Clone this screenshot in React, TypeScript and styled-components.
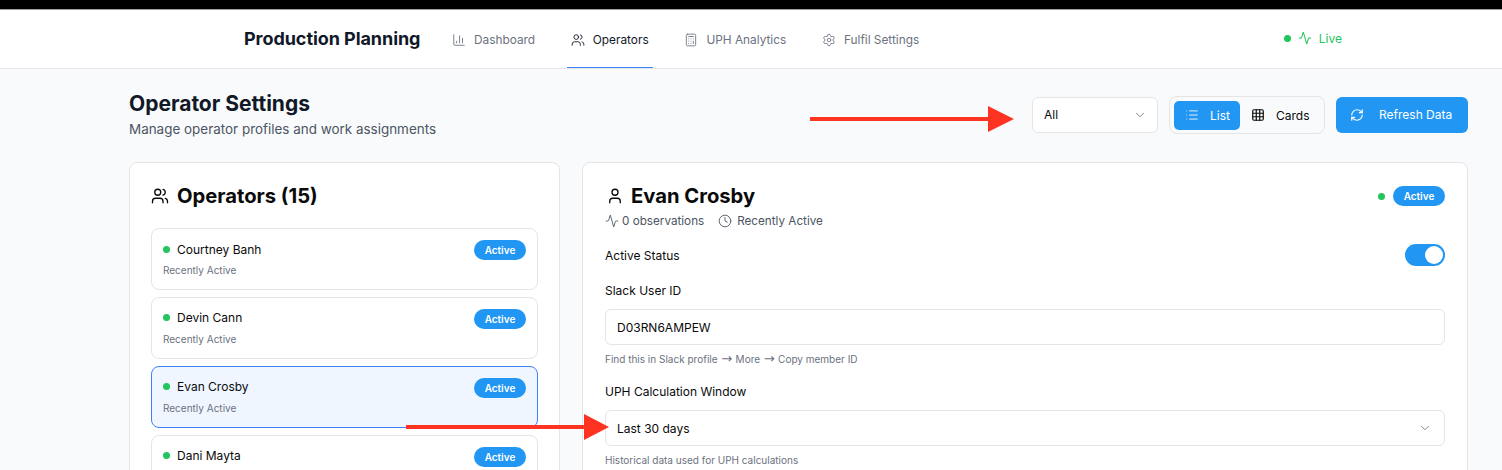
import React from "react";
import styled, { createGlobalStyle } from "styled-components";
import { Activity, Calculator, ChartColumn, ChevronDown, Clock, Grid3x3, List, RefreshCw, Settings, User, Users } from "lucide-react";

const Global = createGlobalStyle`
  html, body { margin: 0; padding: 0; height: 470px; overflow: hidden; background: #f9fafb; }
  body { font-family: Inter, "Liberation Sans", Arial, sans-serif; color: #0a0a0a; -webkit-font-smoothing: antialiased; }
  * { box-sizing: border-box; }
`;

const Page = styled.div`
  position: relative;
  width: 1502px;
  height: 470px;
  overflow: hidden;
`;
const TopStrip = styled.div`
  height: 10px;
  background: #000;
  border-bottom: 1px solid #a0a0a0;
`;
const Header = styled.header`
  height: 59px;
  background: #fff;
  border-bottom: 1px solid #e5e7eb;
  display: flex;
  align-items: stretch;
  padding-left: 244px;
  padding-right: 160px;
`;
const Brand = styled.div`
  font-size: 18px;
  font-weight: 700;
  color: #111827;
  line-height: 58px;
  width: 175px;
  letter-spacing: -0.06px;
  white-space: nowrap;
`;
const Nav = styled.nav`
  display: flex;
  margin-left: 29px;
  flex: 1;
`;
const Tab = styled.div<{ $active?: boolean }>`
  display: flex;
  align-items: center;
  gap: 8px;
  height: 58px;
  padding: 2px 4px 0;
  margin-right: 27.7px;
  font-size: 11.85px;
  color: ${(p) => (p.$active ? "#111827" : "#6b7280")};
  border-bottom: 1px solid ${(p) => (p.$active ? "#3b82f6" : "transparent")};
  white-space: nowrap;
`;
const Live = styled.div`
  display: flex;
  align-items: center;
  color: #22c55e;
  font-size: 12px;
  gap: 7px;
  padding-bottom: 2px;
`;
const Dot = styled.span`
  width: 7px;
  height: 7px;
  border-radius: 50%;
  background: #22c55e;
  flex: none;
`;
const Main = styled.main`
  padding: 27px 34px 0 129px;
`;
const TitleRow = styled.div`
  display: flex;
  justify-content: space-between;
  align-items: flex-start;
`;
const Titles = styled.div``;
const H1 = styled.h1`
  margin: 0;
  font-size: 21px;
  line-height: 16px;
  font-weight: 700;
  color: #111827;
`;
const Sub = styled.p`
  margin: 8px 0 0;
  font-size: 13.44px;
  line-height: 18px;
  color: #4b5563;
`;
const Controls = styled.div`
  display: flex;
  align-items: center;
  gap: 11px;
`;
const Select = styled.div`
  width: 126px;
  height: 36px;
  background: #fff;
  border: 1px solid #e5e5e5;
  border-radius: 6px;
  display: flex;
  align-items: center;
  justify-content: space-between;
  padding: 0 10px 1px 11px;
  font-size: 12px;
`;
const Toggle = styled.div`
  display: flex;
  height: 38px;
  width: 156px;
  padding: 4px;
  border: 1px solid #e5e5e5;
  border-radius: 8px;
`;
const ToggleBtn = styled.div<{ $on?: boolean }>`
  display: flex;
  align-items: center;
  gap: 11px;
  height: 29px;
  padding: 0 0 1px 11px;
  width: ${(p) => (p.$on ? "66px" : "auto")};
  border-radius: 5px;
  font-size: 12px;
  background: ${(p) => (p.$on ? "#2196f3" : "transparent")};
  color: ${(p) => (p.$on ? "#fff" : "#0a0a0a")};
`;
const Refresh = styled.div`
  display: flex;
  align-items: center;
  gap: 15px;
  height: 36px;
  width: 132px;
  padding: 0 0 1px 14px;
  background: #2196f3;
  color: #fff;
  border-radius: 6px;
  font-size: 12px;
`;
const Columns = styled.div`
  display: grid;
  grid-template-columns: 431px 886px;
  gap: 22px;
  margin-top: 24px;
`;
const Card = styled.section`
  background: #fff;
  border: 1px solid #e5e5e5;
  border-radius: 8px;
  height: 330px;
`;
const ListCard = styled(Card)`
  padding: 21px 21px 0 21px;
`;
const CardTitle = styled.div`
  display: flex;
  align-items: center;
  gap: 8px;
  font-size: 20.2px;
  font-weight: 700;
  line-height: 24px;
`;
const Rows = styled.div`
  margin-top: 20px;
  display: flex;
  flex-direction: column;
  gap: 6.9px;
`;
const Row = styled.div<{ $sel?: boolean }>`
  height: 62px;
  border: 1px solid ${(p) => (p.$sel ? "#3b82f6" : "#e5e5e5")};
  border-radius: 8px;
  background: ${(p) => (p.$sel ? "#eff6ff" : "#fff")};
  padding: 11px 11px 0;
`;
const RowTop = styled.div`
  display: flex;
  align-items: center;
  justify-content: space-between;
  height: 20px;
`;
const Name = styled.div`
  display: flex;
  align-items: center;
  gap: 7px;
  font-size: 12px;
  margin-top: -2px;
`;
const RowMeta = styled.div`
  margin-top: 3px;
  font-size: 10px;
  line-height: 14px;
  color: #6b7280;
`;
const Badge = styled.span`
  display: inline-flex;
  align-items: center;
  justify-content: center;
  width: 52px;
  height: 20px;
  border-radius: 10px;
  background: #2196f3;
  color: #fff;
  font-size: 10px;
  font-weight: 600;
`;
const DetailCard = styled(Card)`
  padding: 21px 22px 0;
`;
const DetailHead = styled.div`
  display: flex;
  justify-content: space-between;
  align-items: center;
  height: 24px;
`;
const DetailName = styled(CardTitle)`
  gap: 7px;
  padding-left: 1px;
`;
const HeadStatus = styled.div`
  display: flex;
  align-items: center;
  gap: 8px;
`;
const Stats = styled.div`
  display: flex;
  gap: 14px;
  margin-top: 5px;
  font-size: 11.7px;
  line-height: 16px;
  color: #4b5563;
`;
const Stat = styled.span<{ $gap: number }>`
  display: flex;
  align-items: center;
  gap: ${(p) => p.$gap}px;
`;
const StatusRow = styled.div`
  display: flex;
  justify-content: space-between;
  align-items: center;
  margin-top: 15px;
  height: 22px;
  font-size: 12px;
`;
const Switch = styled.div`
  width: 40px;
  height: 22px;
  border-radius: 11px;
  background: #2196f3;
  display: flex;
  justify-content: flex-end;
  align-items: center;
  padding-right: 2px;
`;
const Knob = styled.span`
  width: 18px;
  height: 18px;
  border-radius: 50%;
  background: #fff;
`;
const Label = styled.div<{ $top: number }>`
  font-size: 12px;
  line-height: 16px;
  margin-top: ${(p) => p.$top}px;
`;
const Field = styled.div`
  height: 36px;
  margin-top: 10px;
  border: 1px solid #e5e5e5;
  border-radius: 6px;
  background: #fff;
  display: flex;
  align-items: center;
  justify-content: space-between;
  font-size: 12px;
  padding: 0 12px 0 11px;
`;
const Hint = styled.div`
  margin-top: 7px;
  font-size: 10px;
  line-height: 14px;
  color: #6b7280;
`;
const HintArrow = styled.span`
  font-family: "DejaVu Sans", sans-serif;
  font-size: 13px;
  line-height: 0;
  margin: 0 0.75px;
`;
const Arrow = styled.svg<{ $x: number; $y: number }>`
  position: absolute;
  left: ${(p) => p.$x}px;
  top: ${(p) => p.$y}px;
`;

const names = ["Courtney Banh", "Devin Cann", "Evan Crosby", "Dani Mayta"];

export default function App() {
  return (
    <Page>
      <Global />
      <TopStrip />
      <Header>
        <Brand>Production Planning</Brand>
        <Nav>
          <Tab><ChartColumn size={14} strokeWidth={1.5} />Dashboard</Tab>
          <Tab $active><Users size={14} strokeWidth={1.5} />Operators</Tab>
          <Tab><Calculator size={14} strokeWidth={1.5} />UPH Analytics</Tab>
          <Tab><Settings size={14} strokeWidth={1.5} />Fulfil Settings</Tab>
        </Nav>
        <Live><Dot /><Activity size={14} strokeWidth={1.75} />Live</Live>
      </Header>
      <Main>
        <TitleRow>
          <Titles>
            <H1>Operator Settings</H1>
            <Sub>Manage operator profiles and work assignments</Sub>
          </Titles>
          <Controls>
            <Select>All<ChevronDown size={14} color="#737373" strokeWidth={1.5} /></Select>
            <Toggle>
              <ToggleBtn $on><List size={14} strokeWidth={1.5} />List</ToggleBtn>
              <ToggleBtn><Grid3x3 size={14} strokeWidth={2} />Cards</ToggleBtn>
            </Toggle>
            <Refresh><RefreshCw size={14} strokeWidth={2} />Refresh Data</Refresh>
          </Controls>
        </TitleRow>
        <Columns>
          <ListCard>
            <CardTitle><Users size={18} strokeWidth={1.75} />Operators (15)</CardTitle>
            <Rows>
              {names.map((n) => (
                <Row key={n} $sel={n === "Evan Crosby"}>
                  <RowTop>
                    <Name><Dot />{n}</Name>
                    <Badge>Active</Badge>
                  </RowTop>
                  <RowMeta>Recently Active</RowMeta>
                </Row>
              ))}
            </Rows>
          </ListCard>
          <DetailCard>
            <DetailHead>
              <DetailName><User size={18} strokeWidth={1.75} />Evan Crosby</DetailName>
              <HeadStatus><Dot /><Badge>Active</Badge></HeadStatus>
            </DetailHead>
            <Stats>
              <Stat $gap={3}><Activity size={14} strokeWidth={1.5} />0 observations</Stat>
              <Stat $gap={5}><Clock size={14} strokeWidth={1.5} />Recently Active</Stat>
            </Stats>
            <StatusRow>Active Status<Switch><Knob /></Switch></StatusRow>
            <Label $top={17}>Slack User ID</Label>
            <Field>D03RN6AMPEW</Field>
            <Hint>Find this in Slack profile <HintArrow>→</HintArrow> More <HintArrow>→</HintArrow> Copy member ID</Hint>
            <Label $top={18}>UPH Calculation Window</Label>
            <Field>Last 30 days<ChevronDown size={14} color="#737373" strokeWidth={1.5} /></Field>
            <Hint>Historical data used for UPH calculations</Hint>
          </DetailCard>
        </Columns>
      </Main>
      <Arrow $x={810} $y={105} width={204} height={28} viewBox="0 0 204 28">
        <rect x="0" y="12" width="180" height="4" fill="#ff3322" />
        <polygon points="178,1 204,14 178,27" fill="#ff3322" />
      </Arrow>
      <Arrow $x={406} $y={414} width={204} height={26} viewBox="0 0 204 26">
        <rect x="0" y="11" width="180" height="4" fill="#ff3322" />
        <polygon points="178,0 203,13 178,26" fill="#ff3322" />
      </Arrow>
    </Page>
  );
}
